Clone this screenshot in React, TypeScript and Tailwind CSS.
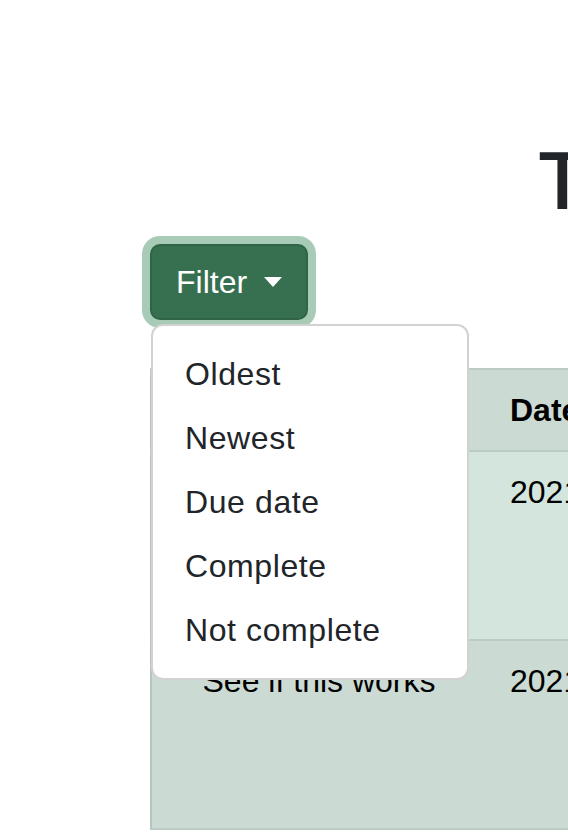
import React from "react";

const items = ["Oldest", "Newest", "Due date", "Complete", "Not complete"];

export default function App() {
  return (
    <div className="relative w-[568px] h-[832px] overflow-hidden bg-white font-['Liberation_Sans',Arial,sans-serif]">
      <div className="pt-[134px] pl-[538px] whitespace-nowrap">
        <h1 className="text-[80px] leading-[96px] font-medium text-[#212529] font-['Roboto','Liberation_Sans',sans-serif]">
          Todo List
        </h1>
      </div>

      <div className="relative mt-[14px] pl-[150px]">
        <button className="flex items-center h-[76px] px-[24px] rounded-[10px] border-2 border-[#2f6446] bg-[#367050] text-white text-[32px] leading-[48px] shadow-[0_0_0_8px_#a8cbb8] whitespace-nowrap">
          <span>Filter&nbsp;</span>
          <span className="ml-[8px] w-0 h-0 border-t-[10px] border-t-white border-x-[9.5px] border-x-transparent" />
        </button>

        <div className="absolute z-10 top-[80px] left-[151px] w-[318px] py-[16px] bg-white border-2 border-[rgba(0,0,0,0.175)] rounded-[12px]">
          {items.map((it) => (
            <div
              key={it}
              className="h-[64px] px-[32px] py-[8px] text-[32px] leading-[48px] tracking-[0.6px] text-[#212529] whitespace-nowrap"
            >
              {it}
            </div>
          ))}
        </div>
      </div>

      <div className="mt-[48px] ml-[150px] w-[700px]">
        <table className="w-[700px] border-collapse border-l-2 border-t-2 border-l-[#b4c6bd] border-t-[#bccbc3] text-[32px] leading-[48px] text-black">
          <thead>
            <tr className="bg-[#cbdad3] border-b-2 border-[#bccbc3]">
              <th className="w-[343px] h-[80px] pl-[16px] pr-[24px] py-[16px] font-bold text-center whitespace-nowrap">
                Task
              </th>
              <th className="px-[16px] py-[16px] font-bold text-left whitespace-nowrap">
                Date created
              </th>
            </tr>
          </thead>
          <tbody>
            <tr className="bg-[#d4e5dd] border-b-2 border-[#bccbc3]">
              <td className="h-[189px] pl-[16px] pr-[24px] py-[16px] align-top text-center whitespace-nowrap">
                Test task
              </td>
              <td className="px-[16px] py-[16px] align-top whitespace-nowrap">
                2021-05-12
              </td>
            </tr>
            <tr className="bg-[#cbdad3] border-b-2 border-[#bccbc3]">
              <td className="h-[189px] pl-[16px] pr-[24px] py-[16px] align-top text-center whitespace-nowrap">
                See if this works
              </td>
              <td className="px-[16px] py-[16px] align-top whitespace-nowrap">
                2021-05-13
              </td>
            </tr>
          </tbody>
        </table>
      </div>
    </div>
  );
}
